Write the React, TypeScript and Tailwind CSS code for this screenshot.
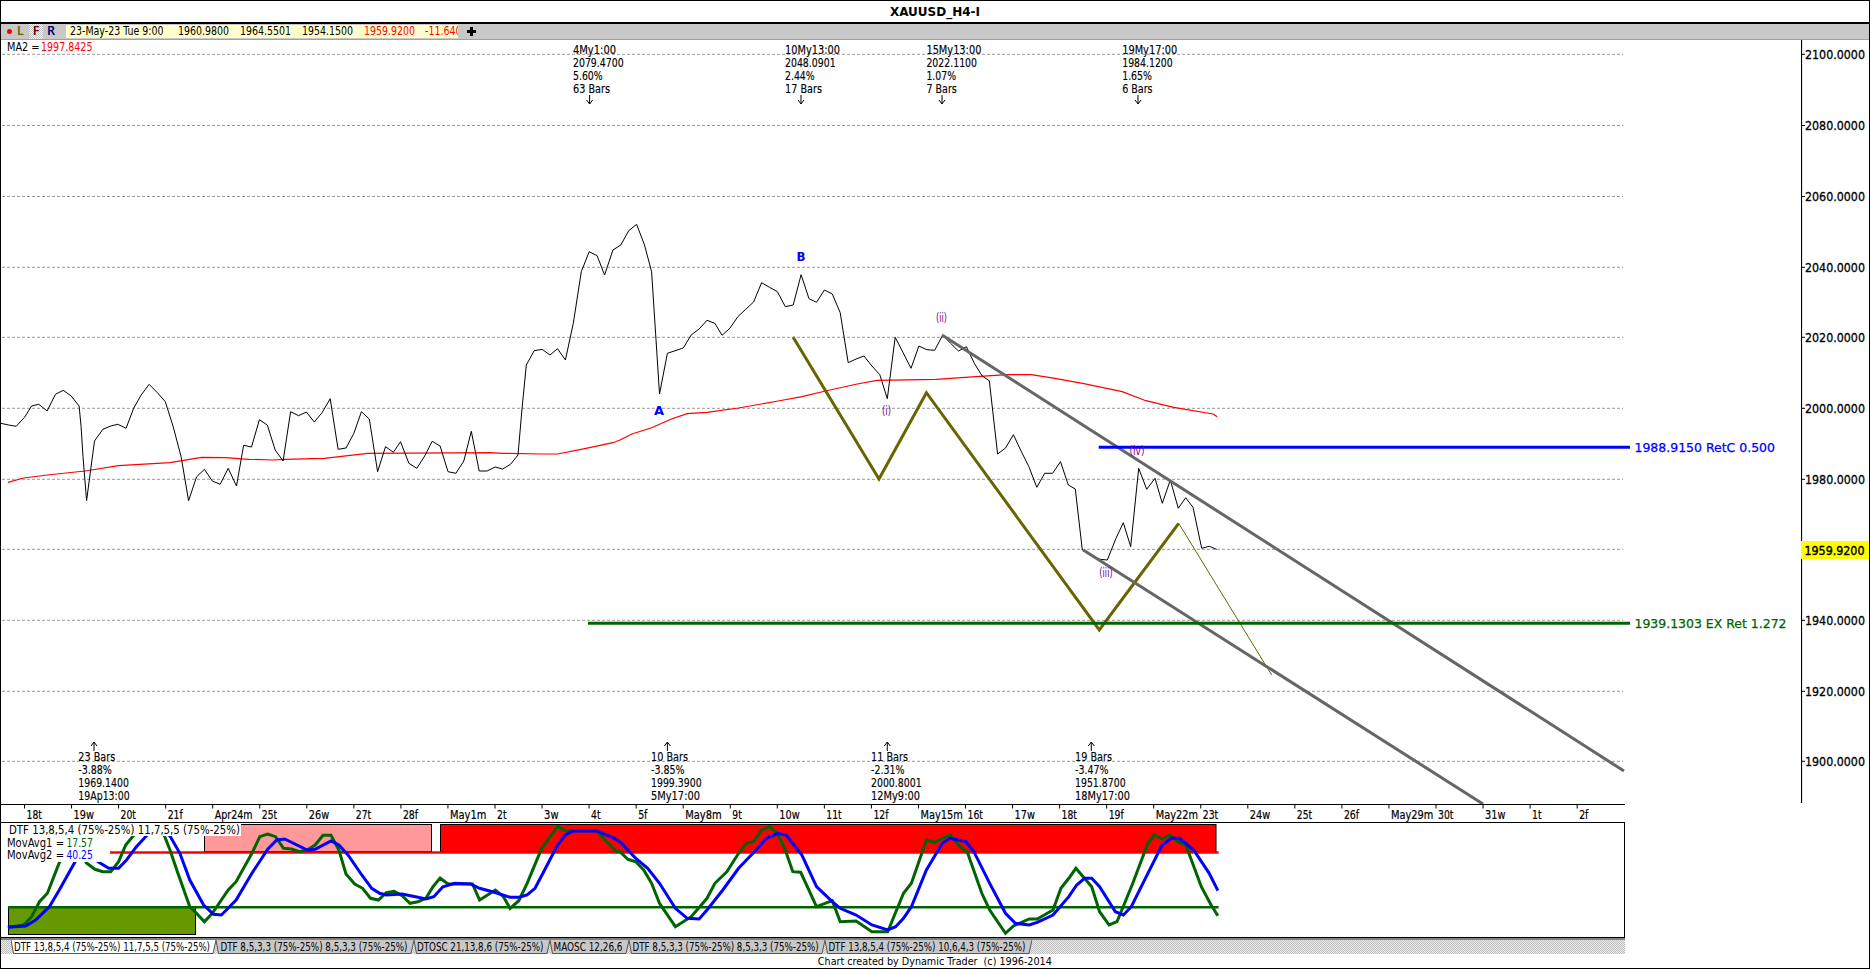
import React from "react";

type P = [number, number];
const KX = 1568 / 620;
const conv = (pts: P[], x0: number, y0: number, kx = KX, ky = 3): P[] =>
  pts.map(([x, y]) => [x0 + x / kx, y0 + y / ky] as P);
const d = (pts: P[]) => pts.map(([x, y], i) => `${i ? "L" : "M"}${x.toFixed(1)} ${y.toFixed(1)}`).join(" ");

const priceA: P[] = [[2,670],[22,675],[41,679],[62,652],[80,618],[98,613],[119,633],[140,583],[160,571],[180,588],[200,618],[205,680],[210,770],[219,902],[228,820],[239,723],[260,688],[280,678],[298,673],[319,685],[338,625],[357,585],[377,553],[397,577],[418,605],[438,680],[458,770],[477,902],[497,831],[517,808],[537,843],[557,853],[577,805],[598,858],[616,736],[636,741],[656,659],[676,675],[696,750],[716,783],[735,635],[755,647],[775,636],[795,666],[815,637],[835,596],[855,748],[875,744],[895,700],[914,635],[934,657],[955,815],[975,740],[995,757],[1013,725],[1034,790],[1054,805],[1074,768],[1093,724],[1113,738],[1133,815],[1153,820],[1173,783],[1192,694],[1212,813],[1232,813],[1252,801],[1271,807],[1291,793],[1310,765],[1320,630],[1331,495],[1351,452],[1371,448],[1391,465],[1410,446],[1430,480],[1450,370],[1470,215],[1490,155],[1510,167],[1529,225],[1550,150]];
const priceB: P[] = [[2,135],[22,92],[42,73],[62,135],[80,215],[90,400],[100,582],[120,460],[160,444],[180,405],[200,387],[220,361],[240,370],[258,406],[278,385],[298,350],[318,328],[338,306],[358,248],[378,262],[398,275],[418,320],[438,315],[458,224],[478,296],[497,307],[517,270],[537,282],[557,338],[577,488],[597,477],[617,468],[637,498],[657,524],[676,596],[696,412],[716,458],[736,505],[756,438],[776,449],[796,451],[816,405],[836,430],[856,453],[876,440],[896,490],[916,528],[934,542],[955,762],[975,744],[995,704],[1014,752],[1034,800],[1054,862],[1074,820],[1094,820],[1114,785]];
const priceC: P[] = [[85,165],[106,177],[127,360],[150,375],[180,388],[202,390],[228,325],[250,278],[272,350],[296,115],[320,178],[345,145],[367,220],[391,150],[415,235],[437,203],[459,232],[485,355],[508,349],[530,358]];
const price = [...conv(priceA, 0, 200), ...conv(priceB, 620, 200), ...conv(priceC, 1040, 430, 3, 3)];

const maA: P[] = [[20,847],[60,834],[120,825],[215,813],[300,797],[430,788],[510,772],[570,773],[630,778],[690,780],[720,778],[820,775],[930,760],[1240,758],[1270,760],[1370,762],[1410,762],[1470,748],[1550,728]];
const maB: P[] = [[0,720],[30,702],[80,683],[130,657],[170,641],[220,637],[300,624],[400,603],[460,590],[520,573],[600,552],[650,541],[800,538],[900,530],[980,524],[1040,524],[1100,535],[1170,550],[1270,575],[1330,602],[1400,622],[1500,642],[1510,650]];
const ma = [...conv(maA, 0, 200), ...conv(maB, 620, 200)];

const greenA: P[] = [[20,592],[60,585],[80,560],[100,515],[120,490],[150,398],[175,345],[190,320],[218,398],[240,418],[260,425],[280,425],[300,395],[318,345],[335,320],[355,295],[380,285],[410,300],[430,360],[450,430],[480,530],[497,550],[517,575],[537,550],[577,480],[597,455],[637,370],[657,320],[677,312],[697,320],[717,355],[737,357],[757,365],[777,360],[797,345],[817,316],[837,316],[857,360],[875,432],[897,462],[917,475],[937,505],[957,510],[977,488],[997,484],[1017,497],[1037,520],[1057,515],[1077,505],[1095,470],[1113,444],[1133,462],[1195,462],[1213,510],[1253,480],[1273,500],[1290,535],[1312,512],[1333,460],[1370,355],[1410,290],[1430,302],[1510,302],[1530,330],[1560,365]];
const greenB: P[] = [[0,365],[20,388],[40,395],[60,420],[80,460],[100,520],[140,590],[180,560],[220,505],[240,460],[270,425],[300,370],[320,340],[338,335],[358,300],[378,290],[398,310],[418,360],[437,425],[457,427],[497,530],[537,512],[557,575],[597,573],[637,605],[677,605],[717,490],[737,460],[775,330],[795,337],[835,315],[860,350],[878,365],[915,490],[935,540],[975,610],[995,588],[1035,567],[1055,567],[1095,540],[1115,475],[1135,445],[1153,415],[1193,470],[1213,545],[1237,585],[1257,575],[1295,465],[1335,340],[1351,315],[1371,327],[1391,315],[1411,335],[1431,345],[1470,470],[1495,525],[1512,557]];
const blueA: P[] = [[20,592],[65,588],[90,570],[125,530],[150,480],[190,395],[205,365],[225,375],[250,397],[275,415],[300,415],[320,390],[345,350],[370,318],[395,290],[430,318],[455,370],[480,450],[515,525],[540,553],[560,555],[597,510],[637,430],[677,358],[700,330],[720,327],[777,360],[797,358],[837,333],[857,345],[880,375],[915,435],[940,475],[960,490],[977,495],[1017,492],[1057,502],[1077,507],[1097,500],[1120,470],[1150,460],[1190,462],[1213,475],[1250,487],[1290,502],[1313,502],[1333,495],[1353,475],[1375,425],[1410,345],[1430,315],[1450,303],[1510,303],[1550,323]];
const blueB: P[] = [[0,335],[40,385],[70,415],[100,460],[140,535],[170,565],[200,567],[220,540],[260,480],[300,415],[340,365],[370,325],[400,310],[420,315],[460,375],[497,470],[537,515],[557,535],[597,555],[637,585],[677,600],[697,590],[717,565],[737,530],[775,420],[815,340],[835,325],[875,335],[895,365],[935,460],[975,550],[1000,580],[1035,585],[1055,577],[1095,555],[1135,500],[1155,465],[1175,445],[1193,445],[1213,470],[1253,545],[1273,555],[1293,530],[1335,430],[1371,345],[1395,325],[1415,325],[1451,360],[1490,430],[1512,482]];
const oscGreen = [...conv(greenA, 0, 730), ...conv(greenB, 620, 730)];
const oscBlue = [...conv(blueA, 0, 730), ...conv(blueB, 620, 730)];

const gridYs = [54.3, 125.5, 196.5, 267.3, 337.3, 408.3, 479.3, 549.3, 620.3, 691.3, 761.3];
const prices = [
  ["2100.0000", 54.3], ["2080.0000", 125.5], ["2060.0000", 196.5], ["2040.0000", 267.3], ["2020.0000", 337.3],
  ["2000.0000", 408.3], ["1980.0000", 479.3], ["1940.0000", 620.3], ["1920.0000", 691.3], ["1900.0000", 761.3],
] as const;

type Line = [string, number];
const topLabels: { x: number; ax: number; lines: Line[] }[] = [
  { x: 573, ax: 589.6, lines: [["4My1:00", 43], ["2079.4700", 50.6], ["5.60%", 29.7], ["63 Bars", 37]] },
  { x: 785, ax: 801, lines: [["10My13:00", 55], ["2048.0901", 50.6], ["2.44%", 29.7], ["17 Bars", 37]] },
  { x: 926.4, ax: 942, lines: [["15My13:00", 55], ["2022.1100", 50.6], ["1.07%", 29.7], ["7 Bars", 30.4]] },
  { x: 1122.2, ax: 1138, lines: [["19My17:00", 55], ["1984.1200", 50.6], ["1.65%", 29.7], ["6 Bars", 30.4]] },
];
const bottomLabels: { x: number; ax: number; lines: Line[] }[] = [
  { x: 78.3, ax: 94, lines: [["23 Bars", 37], ["-3.88%", 33.6], ["1969.1400", 50.6], ["19Ap13:00", 51.4]] },
  { x: 651, ax: 667.4, lines: [["10 Bars", 37], ["-3.85%", 33.6], ["1999.3900", 50.6], ["5My17:00", 49]] },
  { x: 871, ax: 887.3, lines: [["11 Bars", 37], ["-2.31%", 33.6], ["2000.8001", 50.6], ["12My9:00", 49]] },
  { x: 1075, ax: 1091.3, lines: [["19 Bars", 37], ["-3.47%", 33.6], ["1951.8700", 50.6], ["18My17:00", 55]] },
];

const days = ["18t","19w","20t","21f","Apr24m","25t","26w","27t","28f","May1m","2t","3w","4t","5f","May8m","9t","10w","11t","12f","May15m","16t","17w","18t","19f","May22m","23t","24w","25t","26f","May29m","30t","31w","1t","2f"];
const cw: Record<string, number> = { t: 3.6, w: 8.6, f: 3.4, m: 9.6, M: 9, a: 6, y: 6, A: 6.5, p: 6, r: 4 };
const dayWidth = (s: string) => [...s].reduce((a, c) => a + (cw[c] ?? 5.9), 0);

const tabs = [
  { t: "DTF 13,8,5,4 (75%-25%) 11,7,5,5 (75%-25%)", w: 205, tw: "w-[205px]", l: 3, tl: 196, active: true },
  { t: "DTF 8,5,3,3 (75%-25%) 8,5,3,3 (75%-25%)", w: 198, tw: "w-[198px]", l: 4.5, tl: 187 },
  { t: "DTOSC 21,13,8,6 (75%-25%)", w: 136, tw: "w-[136px]", l: 3, tl: 126.5 },
  { t: "MAOSC 12,26,6", w: 79, tw: "w-[79px]", l: 3.5, tl: 69 },
  { t: "DTF 8,5,3,3 (75%-25%) 8,5,3,3 (75%-25%)", w: 196, tw: "w-[196px]", l: 3.6, tl: 186 },
  { t: "DTF 13,8,5,4 (75%-25%) 10,6,4,3 (75%-25%)", w: 207, tw: "w-[207px]", l: 3.4, tl: 197 },
];

function T({ x, y, w, cls = "", children }: { x: number; y: number; w?: number; cls?: string; children: string }) {
  return (
    <text x={x} y={y} textLength={w} lengthAdjust={w ? "spacingAndGlyphs" : undefined} className={`text-[11.5px] ${cls}`}>
      {children}
    </text>
  );
}

function Wave({ x, y, t, w }: { x: number; y: number; t: string; w: number }) {
  return <T x={x - w / 2} y={y + 4} w={w} cls="fill-[#800080]">{t}</T>;
}

function PriceChart() {
  return (
    <svg viewBox="1 40 1800 764" className="w-[1800px] h-[764px] shrink-0 block">
      {gridYs.map((y) => (
        <line key={y} x1={2} x2={1623} y1={y} y2={y} stroke="#999999" strokeDasharray="3 2" strokeWidth={1} />
      ))}
      <T x={7} y={51} w={32.5}>MA2 =</T>
      <T x={41} y={51} w={51.5} cls="fill-[#ff0000]">1997.8425</T>

      <path d={d(ma)} fill="none" stroke="#ff0000" strokeWidth={1.2} />
      <path d={d(price)} fill="none" stroke="#000000" strokeWidth={1} />

      <path d="M793 337 L879 479 L926.4 392.7 L1099.3 630 L1178.7 523.3" fill="none" stroke="#666600" strokeWidth={3} />
      <line x1={1178.7} y1={523.3} x2={1271.7} y2={675} stroke="#666600" strokeWidth={1} />
      <line x1={942} y1={335} x2={1624} y2={771} stroke="#666666" strokeWidth={3} />
      <line x1={1083.3} y1={550} x2={1483} y2={804} stroke="#666666" strokeWidth={3} />
      <line x1={1098.7} y1={447.3} x2={1630} y2={447.3} stroke="#0000ff" strokeWidth={3} />
      <line x1={588} y1={623.3} x2={1630} y2={623.3} stroke="#006400" strokeWidth={3} />

      <T x={1634.5} y={452} w={140.5} cls="text-[13px] fill-[#0000ff] stroke-[#0000ff] stroke-[0.25px]">1988.9150 RetC 0.500</T>
      <T x={1634.5} y={628} w={152} cls="text-[13px] fill-[#006400] stroke-[#006400] stroke-[0.25px]">1939.1303 EX Ret 1.272</T>

      <T x={654} y={414.5} w={10} cls="text-[13px] font-bold fill-[#0000ff]">A</T>
      <T x={796.5} y={261} w={9} cls="text-[13px] font-bold fill-[#0000ff]">B</T>
      <Wave x={941.5} y={318.3} t="(ii)" w={11} />
      <Wave x={886.5} y={411.3} t="(i)" w={9} />
      <Wave x={1137} y={451} t="(iv)" w={15} />
      <Wave x={1106} y={572.7} t="(iii)" w={13.5} />

      {topLabels.map((l) => (
        <g key={l.x}>
          {l.lines.map(([t, w], i) => (
            <T key={t} x={l.x} y={54 + i * 13} w={w} cls="stroke-black stroke-[0.15px]">{t}</T>
          ))}
          <path d={`M${l.ax} 95V104M${l.ax - 3} 100L${l.ax} 104L${l.ax + 3} 100`} fill="none" stroke="#000" strokeWidth={1} />
        </g>
      ))}
      {bottomLabels.map((l) => (
        <g key={l.x}>
          {l.lines.map(([t, w], i) => (
            <T key={t} x={l.x} y={761.3 + i * 13} w={w} cls="stroke-black stroke-[0.15px]">{t}</T>
          ))}
          <path d={`M${l.ax} 751V742M${l.ax - 3} 746L${l.ax} 742L${l.ax + 3} 746`} fill="none" stroke="#000" strokeWidth={1} />
        </g>
      ))}
    </svg>
  );
}

function PriceAxis() {
  return (
    <svg viewBox="1801 40 68 764" className="w-[68px] h-[764px] shrink-0 block">
      <line x1={1801.5} x2={1801.5} y1={40} y2={803} stroke="#000" strokeWidth={1.2} />
      {prices.map(([t, y]) => (
        <g key={t}>
          <line x1={1801} x2={1805} y1={y} y2={y} stroke="#000" strokeWidth={1} />
          <T x={1805} y={y + 4.5} w={60} cls="text-[12.5px] stroke-black stroke-[0.3px]">{t}</T>
        </g>
      ))}
      <rect x={1800.5} y={541} width={69} height={18} fill="#ffff00" />
      <T x={1804.5} y={555} w={60} cls="text-[12.5px] stroke-black stroke-[0.4px]">1959.9200</T>
    </svg>
  );
}

function TimeAxis() {
  return (
    <div className="w-[1624px] h-[18px] border-t-[1.5px] border-black shrink-0">
      <svg viewBox="1 805.5 1623 16.5" className="w-[1623px] h-[16.5px] block">
        {days.map((t, i) => {
          const x = 24.5 + i * 47.05;
          return (
            <g key={i}>
              <line x1={x} x2={x} y1={805} y2={809} stroke="#000" strokeWidth={1} />
              <T x={x + 2} y={819.5} w={dayWidth(t)} cls="stroke-black stroke-[0.2px]">{t}</T>
            </g>
          );
        })}
      </svg>
    </div>
  );
}

function Indicator() {
  return (
    <div className="w-[1624px] h-[116px] border-y-[1.5px] border-r border-black shrink-0">
      <svg viewBox="1 823 1623 113" className="w-[1623px] h-[113px] block">
        <rect x={204.5} y={824.5} width={227} height={27} fill="#ff9999" stroke="#000" strokeWidth={1} />
        <rect x={440.5} y={824.5} width={775.5} height={27} fill="#ff0000" stroke="#000" strokeWidth={1} />
        <rect x={8.5} y={907.5} width={187} height={27} fill="#669900" stroke="#000" strokeWidth={1} />
        <line x1={110} x2={1218.6} y1={852.6} y2={852.6} stroke="#ff0000" strokeWidth={2.5} />
        <line x1={8} x2={1218.6} y1={907.3} y2={907.3} stroke="#006400" strokeWidth={2.5} />
        <path d={d(oscGreen)} fill="none" stroke="#006400" strokeWidth={3} />
        <path d={d(oscBlue)} fill="none" stroke="#0000ff" strokeWidth={3} />

        <rect x={6} y={823} width={235} height={13} fill="#ffffff" />
        <rect x={6} y={836} width={104} height={26} fill="#ffffff" />
        <T x={9} y={834} w={231}>DTF 13,8,5,4 (75%-25%) 11,7,5,5 (75%-25%)</T>
        <T x={7} y={846.5} w={57}>MovAvg1 =</T>
        <T x={66.4} y={846.5} w={26.5} cls="fill-[#006400]">17.57</T>
        <T x={7} y={859} w={57}>MovAvg2 =</T>
        <T x={66.4} y={859} w={26.5} cls="fill-[#0000ff]">40.25</T>
      </svg>
    </div>
  );
}

function TabStrip() {
  return (
    <div className="w-[1624px] h-[16px] shrink-0 border-t-2 border-[#808080] pl-[10px] flex bg-[repeating-conic-gradient(#bdbdbd_0_25%,#ededed_0_50%)] bg-[length:2px_2px]">
      {tabs.map((tab, i) => (
        <div key={i} className={`${tab.tw} h-[14px] shrink-0`}>
          <svg viewBox={`0 0 ${tab.w} 14`} className="w-full h-full block">
            <polygon
              points={`0,0 ${tab.w},0 ${tab.w - 3},13.5 2.5,13.5`}
              fill={tab.active ? "#ffffff" : "#c8c8c8"}
            />
            <polyline
              points={`0,0 2.5,13.5 ${tab.w - 3},13.5 ${tab.w},0`}
              fill="none"
              stroke="#555555"
              strokeWidth={1}
            />
            <T x={tab.l} y={10.8} w={tab.tl} cls="text-[10.5px]">{tab.t}</T>
          </svg>
        </div>
      ))}
    </div>
  );
}

function Toolbar() {
  const num = "inline-block origin-left scale-x-[0.82] whitespace-nowrap";
  return (
    <div className="h-[16px] shrink-0 bg-[#c8c8c8] border-b border-[#a0a0a0] flex items-center text-[11.5px] leading-none">
      <div className="w-[28px] flex items-center pl-[6px] gap-[5px] shrink-0">
        <span className="w-[5px] h-[5px] rounded-full bg-[#ff0000]" />
        <span className="text-[#666600] font-['Noto_Sans'] font-semibold text-[12.5px]">L</span>
      </div>
      <div className="w-[14px] h-[15px] shrink-0 flex items-center justify-center font-['Noto_Sans'] font-semibold text-[12.5px] text-[#660000] bg-[repeating-conic-gradient(#bdbdbd_0_25%,#ffffff_0_50%)] bg-[length:2px_2px]">
        F
      </div>
      <div className="w-[23px] shrink-0 pl-[4px] font-['Noto_Sans'] font-semibold text-[12.5px] text-[#000066]">R</div>
      <div className="w-[392px] h-[13px] shrink-0 bg-[#ffffcc] flex items-center whitespace-nowrap pl-[4px]">
        <span className="w-[108px] shrink-0"><span className={num}>23-May-23 Tue 9:00</span></span>
        <span className="w-[62px] shrink-0"><span className={num}>1960.9800</span></span>
        <span className="w-[62px] shrink-0"><span className={num}>1964.5501</span></span>
        <span className="w-[62px] shrink-0"><span className={num}>1954.1500</span></span>
        <span className="w-[61px] shrink-0 text-[#ff0000]"><span className={num}>1959.9200</span></span>
        <span className="w-[33px] shrink-0 overflow-hidden text-[#ff0000]"><span className={num}>-11.6400</span></span>
      </div>
      <svg viewBox="0 0 9 9" className="w-[9px] h-[9px] ml-[9px] shrink-0">
        <path d="M4.5 0V9M0 4.5H9" stroke="#000" strokeWidth={3} />
      </svg>
    </div>
  );
}

export default function App() {
  return (
    <div className="w-[1870px] h-[969px] box-border border border-black bg-white text-black flex flex-col overflow-hidden font-['DejaVu_Sans',sans-serif]">
      <div className="h-[23px] shrink-0 border-b-2 border-black flex items-center justify-center">
        <span className="text-[12px] font-bold leading-none">XAUUSD_H4-I</span>
      </div>
      <Toolbar />
      <div className="flex h-[764px] shrink-0">
        <PriceChart />
        <PriceAxis />
      </div>
      <TimeAxis />
      <Indicator />
      <TabStrip />
      <div className="flex-1 flex items-center justify-center text-[10.5px] leading-none whitespace-pre">
        <span className="inline-block scale-x-[0.915]">Chart created by Dynamic Trader  (c) 1996-2014</span>
      </div>
    </div>
  );
}
